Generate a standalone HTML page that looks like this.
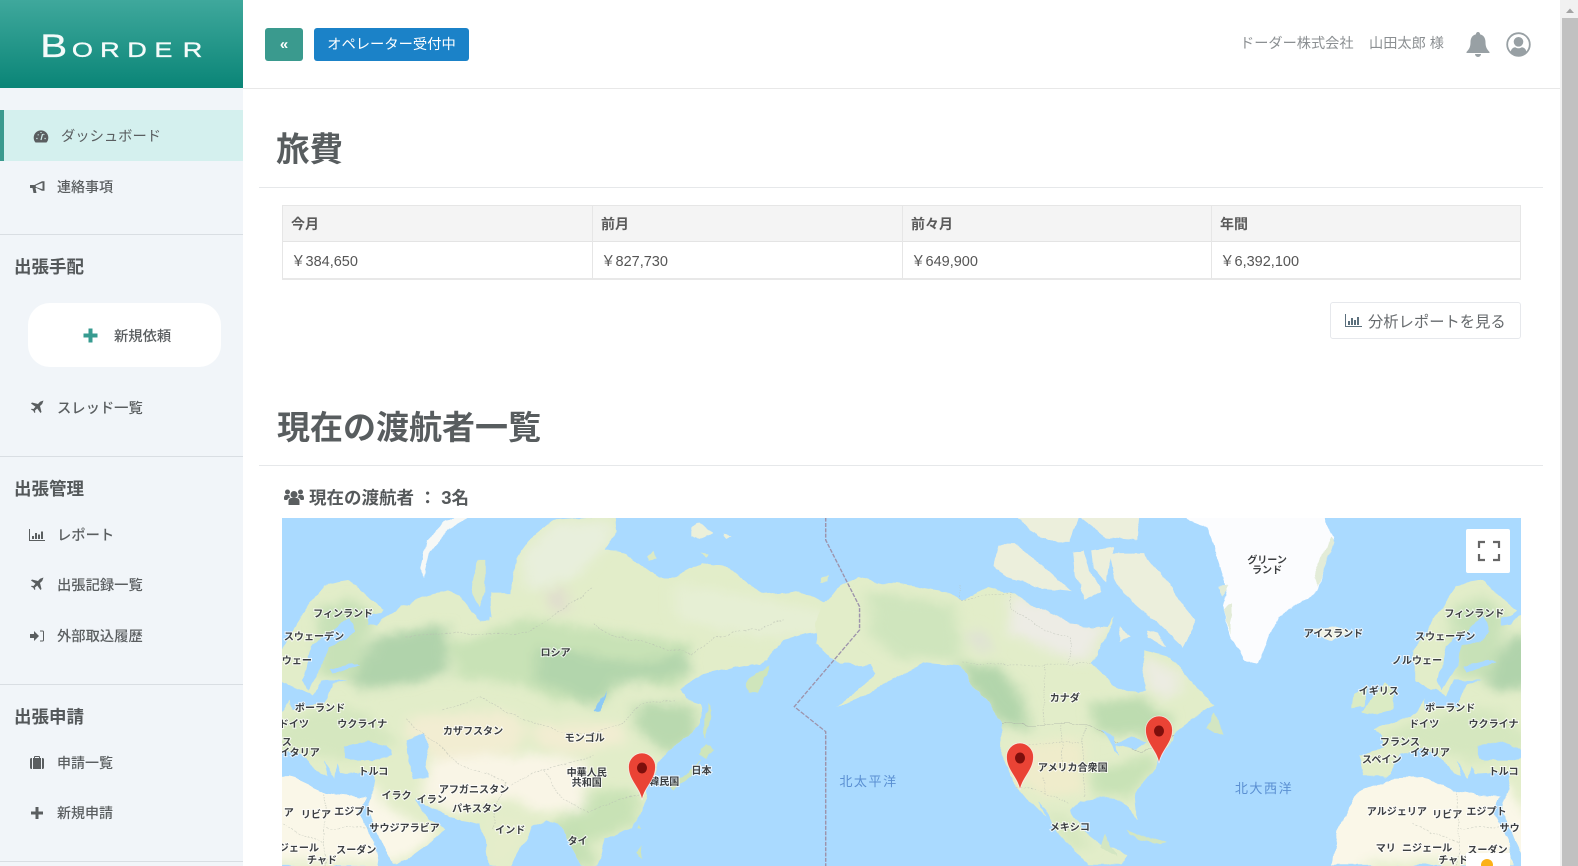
<!DOCTYPE html>
<html lang="ja"><head><meta charset="utf-8"><title>旅費</title>
<style>
*{box-sizing:border-box}
html,body{margin:0;padding:0;width:1578px;height:866px;overflow:hidden;background:#fff}
body{font-family:"Liberation Sans","Noto Sans CJK JP",sans-serif;color:#555;position:relative}
.t{position:absolute;white-space:nowrap;line-height:20px;font-size:14px}
.a{position:absolute}
.m{font-weight:500;color:#5a5e60}
.s{font-size:17.5px;font-weight:700;color:#54585a;left:14px}
.h{font-size:33px;line-height:40px;font-weight:700;color:#585d5f}
.hr{position:absolute;height:1px;background:#e6e8ea}
.sh{position:absolute;left:0;width:243px;height:1px;background:#d9dee3}
.cell{position:absolute;border:1px solid #e6e6e6;font-size:14px;line-height:36px;padding-left:8px;white-space:nowrap}
.th{background:#f4f4f4;font-weight:700;color:#5a5a5a;height:38px;top:205px;border-bottom:2px solid #e4e4e4}
.td{background:#fff;color:#555;height:38px;top:242px;border-top:0;border-bottom:2px solid #e8e8e8;line-height:40px;font-size:14.5px}
svg.i{position:absolute;fill:#5a5e60}
#map text{font-family:"Liberation Sans","Noto Sans CJK JP",sans-serif;font-size:10px;font-weight:700;fill:#3c3f42;text-anchor:middle;stroke:#fff;stroke-width:2px;stroke-opacity:.75;paint-order:stroke}
#map text.o{font-size:13px;font-weight:400;fill:#5a8fd2;stroke:none;letter-spacing:1.5px}
</style></head><body>

<!-- sidebar -->
<div class="a" style="left:0;top:0;width:243px;height:866px;background:#f1f5f9"></div>
<div class="a" style="left:0;top:0;width:243px;height:88px;background:linear-gradient(#3fa89c,#0a8577)"></div>
<svg class="a" style="left:0;top:0" width="243" height="88"><g fill="#f4fbfa" stroke="#f4fbfa" stroke-width=".35" font-family="Liberation Sans" transform="scale(1.26 1)"><text x="32" y="57" font-size="32">B</text><text x="57 79.500 101 122.500 145" y="57" font-size="21.500">ORDER</text></g></svg>

<div class="a" style="left:0;top:110px;width:243px;height:51px;background:#d4f0ee;border-left:4px solid #3a9a8e"></div>
<svg class="i" style="left:33px;top:129px" width="16" height="14" viewBox="0 0 16 14"><path d="M2.500 13.500A7.300 7.300 0 1 1 13.500 13.500Z"/><path d="M8 11L9.500 5M3.300 9.500h1.200M11.500 9.500h1.200M4.800 5.500l.7.700M10.500 5.800l.7-.7M8 3v1" stroke="#d4f0ee" stroke-width="1.200" fill="none"/></svg>
<div class="t" style="left:61px;top:127px;font-size:14.300px;color:#5a5e60">ダッシュボード</div>
<svg class="i" style="left:30px;top:180px" width="15" height="14" viewBox="0 0 15 14"><path d="M0 5h4.500L12 1.200h2.500V10.800H12L6.500 8H5.500L6.500 13H3.500L2.500 8H0Z"/><path d="M5.800 5.500L12.500 2.800V9.200L5.800 7Z" fill="#f1f5f9"/></svg>
<div class="t m" style="left:57px;top:177px">連絡事項</div>
<div class="sh" style="top:234px"></div>

<div class="t s" style="top:257px">出張手配</div>
<div class="a" style="left:28px;top:303px;width:193px;height:64px;background:#fff;border-radius:22px"></div>
<svg class="a" style="left:83px;top:328px" width="15" height="15" viewBox="0 0 15 15"><path d="M5.500 .5h4v5h5v4h-5v5h-4v-5h-5v-4h5z" fill="#379b90"/></svg>
<div class="t m" style="left:114px;top:327px;font-size:14.300px">新規依頼</div>
<svg class="i" style="left:30px;top:400px" width="14" height="14" viewBox="1 1 14 14"><path d="M14.500 1.500L11 2.800 9 5 3 3.500 2 4.500 6.500 7.800 4.500 10 2.500 9.700 2 10.500 4.300 11.800 5.500 14 6.300 13.500 6 11.500 8.200 9.500 11.500 14 12.500 13 11 7l2.200-2z"/></svg>
<div class="t m" style="left:57px;top:399px;font-size:14.300px">スレッド一覧</div>
<div class="sh" style="top:456px"></div>

<div class="t s" style="top:479px">出張管理</div>
<svg class="i" style="left:29px;top:529px" width="16" height="12" viewBox="0 0 16 12"><path d="M0 0h1v11h15v1H0zM3 7h2v3H3zM6 4h2v6H6zM9 5.500h2V10H9zM12 2.500h2V10h-2z"/></svg>
<div class="t m" style="left:57px;top:526px;font-size:14.300px">レポート</div>
<svg class="i" style="left:30px;top:577px" width="14" height="14" viewBox="1 1 14 14"><path d="M14.500 1.500L11 2.800 9 5 3 3.500 2 4.500 6.500 7.800 4.500 10 2.500 9.700 2 10.500 4.300 11.800 5.500 14 6.300 13.500 6 11.500 8.200 9.500 11.500 14 12.500 13 11 7l2.200-2z"/></svg>
<div class="t m" style="left:57px;top:576px;font-size:14.300px">出張記録一覧</div>
<svg class="i" style="left:30px;top:630px" width="14" height="12" viewBox="0 0 14 12"><path d="M0 4h4V1l5 5-5 5V8H0z"/><path d="M10 .5h2.500A1.500 1.500 0 0 1 14 2v8a1.500 1.500 0 0 1-1.500 1.500H10v-1h2.500a.5.5 0 0 0 .5-.5V2a.5.5 0 0 0-.5-.5H10z"/></svg>
<div class="t m" style="left:57px;top:627px;font-size:14.300px">外部取込履歴</div>
<div class="sh" style="top:684px"></div>

<div class="t s" style="top:707px">出張申請</div>
<svg class="i" style="left:30px;top:756px" width="14" height="13" viewBox="0 0 14 13"><path d="M0 3.500A1.500 1.500 0 0 1 1.500 2H2v11h-.5A1.500 1.500 0 0 1 0 11.500zM3 2h1V1a1 1 0 0 1 1-1h4a1 1 0 0 1 1 1v1h1v11H3zM5 2h4V1H5zM12 2h.5A1.500 1.500 0 0 1 14 3.500v8a1.500 1.500 0 0 1-1.500 1.500H12z"/></svg>
<div class="t m" style="left:57px;top:753px">申請一覧</div>
<svg class="i" style="left:31px;top:807px" width="12" height="12" viewBox="0 0 12 12"><path d="M4.500 0h3v4.500H12v3H7.500V12h-3V7.500H0v-3h4.500z"/></svg>
<div class="t m" style="left:57px;top:803px">新規申請</div>
<div class="sh" style="top:861px"></div>

<!-- header -->
<div class="a" style="left:243px;top:88px;width:1317px;height:1px;background:#e8e8e8"></div>
<div class="a" style="left:265px;top:28px;width:38px;height:33px;background:#3a9a8e;border-radius:3px;color:#fff;text-align:center;font-size:15px;line-height:33px;font-weight:700">«</div>
<div class="a" style="left:314px;top:28px;width:155px;height:33px;background:#1b82c8;border-radius:3px;color:#fff;text-align:center;font-size:14.300px;line-height:35px;white-space:nowrap">オペレーター受付中</div>
<div class="t" style="left:1240px;top:34px;font-size:14.200px;color:#8b8f92">ドーダー株式会社</div>
<div class="t" style="left:1369px;top:34px;font-size:14.200px;color:#8b8f92">山田太郎 様</div>
<svg class="a" style="left:1466px;top:32px" width="24" height="25" viewBox="0 0 24 25"><path d="M12 0a2 2 0 0 1 2 2.300c3.800 1 5.500 4 5.500 8 0 5 1.500 7 4 9.700V21H.5v-1c2.500-2.700 4-4.700 4-9.700 0-4 1.700-7 5.500-8A2 2 0 0 1 12 0zM9 22h6a3 3 0 0 1-6 0z" fill="#98a0a4"/></svg>
<svg class="a" style="left:1506px;top:32px" width="25" height="25" viewBox="0 0 25 25"><circle cx="12.500" cy="12.500" r="11.300" fill="none" stroke="#98a0a4" stroke-width="1.800"/><circle cx="12.500" cy="9.800" r="4.800" fill="#98a0a4"/><path d="M4.500 20c.8-3.500 3-4.800 4.800-4.800 1 .7 2 1 3.200 1s2.200-.3 3.200-1c1.800 0 4 1.300 4.800 4.800a11 11 0 0 1-16 0z" fill="#98a0a4"/></svg>

<!-- main -->
<div class="t h" style="left:276px;top:131px;font-size:33.500px">旅費</div>
<div class="hr" style="left:259px;top:187px;width:1284px"></div>

<div class="cell th" style="left:282px;width:311px">今月</div>
<div class="cell th" style="left:592px;width:311px">前月</div>
<div class="cell th" style="left:902px;width:310px">前々月</div>
<div class="cell th" style="left:1211px;width:310px">年間</div>
<div class="cell td" style="left:282px;width:311px">￥384,650</div>
<div class="cell td" style="left:592px;width:311px">￥827,730</div>
<div class="cell td" style="left:902px;width:310px">￥649,900</div>
<div class="cell td" style="left:1211px;width:310px">￥6,392,100</div>

<div class="a" style="left:1330px;top:302px;width:191px;height:37px;border:1px solid #e6e8ec;border-radius:3px;background:#fff"></div>
<svg class="i" style="left:1345px;top:314px;fill:#5b6f7c" width="17" height="13" viewBox="0 0 17 13"><path d="M0 0h1v12h16v1H0zM3 7h2v4H3zM6 4h2v7H6zM9 6h2v5H9zM12 3h2v8h-2z"/></svg>
<div class="t" style="left:1368px;top:312px;font-size:15.300px;line-height:22px;color:#666a6d">分析レポートを見る</div>

<div class="t h" style="left:277px;top:408px">現在の渡航者一覧</div>
<div class="hr" style="left:259px;top:465px;width:1284px"></div>

<svg class="i" style="left:284px;top:489px" width="20" height="16" viewBox="0 0 20 16"><circle cx="10" cy="5.500" r="3.500"/><circle cx="3.500" cy="3" r="2.500"/><circle cx="16.500" cy="3" r="2.500"/><path d="M4.500 16v-3.500C4.500 10 6 9 7.500 9h5c1.500 0 3 1 3 3.500V16zM0 9c0-2 1-3 2-3h3.500c-.3 1 .2 2 1 2.500-2 .3-3 1.500-3.200 2.500H1a1 1 0 0 1-1-1zM20 9c0-2-1-3-2-3h-3.500c.3 1-.2 2-1 2.500 2 .3 3 1.500 3.200 2.500H19a1 1 0 0 0 1-1z"/></svg>
<div class="t" style="left:309px;top:488px;font-size:17.500px;font-weight:700;color:#55595b">現在の渡航者 ： <span style="font-size:18.500px">3</span>名</div>

<!-- map -->
<svg id="map" class="a" style="left:0;top:0" width="1578" height="866" viewBox="0 0 1578 866">
<defs>
<clipPath id="mc"><rect x="282" y="518" width="1239" height="348"/></clipPath>
<filter id="b" x="-15%" y="-15%" width="130%" height="130%"><feGaussianBlur stdDeviation="16"/></filter>
<filter id="r" filterUnits="userSpaceOnUse" x="250" y="490" width="1300" height="400"><feTurbulence type="fractalNoise" baseFrequency=".04" numOctaves="4" seed="7" result="n"/><feDisplacementMap in="SourceGraphic" in2="n" scale="12" xChannelSelector="R" yChannelSelector="G" color-interpolation-filters="sRGB"/></filter>
<path id="eaP" d="M73 640L30 610 30 520 83 420 136 325 200 310 285 400 262 425 250 445 320 400 330 380 360 365 440 340 470 355 500 410 520 430 545 430 550 350 600 350 610 240 640 190 700 130 850 115 855 165 830 215 880 230 960 300 1000 300 1060 260 1130 270 1210 350 1290 340 1340 360 1400 400 1445 435 1420 470 1370 460 1320 470 1260 490 1225 545 1140 570 1070 590 1010 640 1030 665 1060 680 1060 740 1030 780 980 820 955 860 945 905 925 905 930 960 915 1000 890 1050 830 1085 810 1165 770 1165 745 1110 715 1045 680 1030 650 1050 600 1165 545 1165 535 1080 520 1040 445 1020 400 990 365 965 395 1025 440 1060 400 1095 320 1165 310 1165 290 1120 245 1000 252 960 262 885 180 890 170 860 165 905 135 850 147 895 130 890 85 830 50 815-2 830-34 895-92 895-103 830-40 815-44 780-66 755 19 720 41 700 57 665 60 695 140 680 160 620 200 610 130 610 110 660 85 640Z"/>
<path id="afP" d="M240 960L190 955 140 945 70 905 51 900-34 905-108 950-156 1060-170 1165H275L260 1090 225 1000Z"/>
<clipPath id="eaC"><use href="#eaP"/><use href="#afP"/></clipPath>
<g id="eurasia" transform="translate(270 480) scale(.408 .3333)">
<use href="#afP" fill="#faf7e8"/>
<use href="#eaP" fill="#e2edc9"/>
<path d="M-97 700L-40 620-18 640-30 700-60 710ZM-115 650L-85 630-90 680-120 690Z" fill="#dbebc4" stroke="#dbebc4" stroke-width="2"/>
<g clip-path="url(#eaC)"><g filter="url(#b)">
<path d="M190 600L270 480 440 440 440 590 350 620 240 640Z" fill="#b0d3ab"/>
<path d="M440 500L520 480 620 420 1040 500 1010 640 880 600 820 680 700 670 620 620 540 610 470 600Z" fill="#c8e2b6"/>
<path d="M660 510L740 520 900 560 1020 520 1040 590 960 600 850 620 800 690 730 640 660 620Z" fill="#b2d5ac"/>
<path d="M120 400L200 360 260 420 220 600 130 600Z" fill="#c7e1b7"/>
<path d="M900 680L1040 680 1055 780 980 830 900 750Z" fill="#b9d9af"/>
<path d="M770 950L900 940 910 1030 830 1080 780 1100 720 1030Z" fill="#c8e2b5"/>
<path d="M690 1040L760 1040 810 1165 730 1165Z" fill="#c5e0b4"/>
<path d="M350 720L590 700 640 760 600 820 460 850 400 830 340 770Z" fill="#f2edd2"/>
<path d="M660 740L870 740 880 800 720 830 650 790Z" fill="#f2edd2"/>
<path d="M400 840L640 830 780 850 780 1000 680 1010 590 960 450 1010 380 960Z" fill="#f9f5e6"/>
<path d="M-160 950L250 920 300 1000 420 1070 310 1165-170 1165Z" fill="#faf7e8"/>
<path d="M550 1010L640 1030 620 1100 580 1165 540 1160Z" fill="#e5edca"/>
<path d="M-80 1145L300 1150 300 1190-100 1190Z" fill="#e7efcf"/>
<path d="M640 340L760 300 850 180 830 130 700 140 620 240Z" fill="#e8efdc"/>
<path d="M680 340L730 330 740 400 700 410Z" fill="#e0ddce"/>
<path d="M1000 320L1200 360 1400 420 1380 470 1250 480 1150 470 1000 420Z" fill="#e6efd4"/>
<path d="M-60 780L140 690 240 700 320 800 200 850 60 820Z" fill="#d5e7bf"/>
</g></g>
<g fill="#aadaff" stroke="#aadaff" stroke-width="3">
<path d="M110 510L200 420 210 440 215 470 190 490 150 510 135 560 120 600 100 640 90 610 100 550Z"/>
<path d="M155 570L205 555 225 560 160 585Z"/>
<path d="M190 810L250 795 290 810 300 835 265 845 205 845 190 840Z"/>
<path d="M345 790L385 770 395 810 385 860 395 900 360 905 350 860Z"/>
<path d="M525 300L538 240 542 330 550 420 530 415Z"/>
<path d="M245 420L285 410 270 440 245 445Z"/>
<path d="M800 700L830 640 820 700Z" fill="#8cc9f5" stroke="none"/>
</g>
<path d="M385 300L400 220 440 160 505 115 480 115 440 125 390 190 375 280Z" fill="#f6f8f6"/>
<g fill="#dceac6">
<path d="M1040 150L1060 135 1090 170 1060 190 1040 180Z" fill="#ecf0da"/><path d="M1110 170L1135 175 1120 185Z" fill="#ecf0da"/>
<path d="M930 235L945 225 950 245 935 250Z"/><path d="M1060 225L1080 230 1075 240Z"/>
<path d="M1355 300L1380 295 1375 310 1355 310Z"/>
<path d="M515 250L535 250 535 350 520 395 500 340Z"/>
<path d="M1230 560L1215 600 1200 650 1180 650 1175 620 1200 580Z" fill="#cfe5bb"/>
<path d="M1075 680L1085 730 1075 780 1068 720Z" fill="#cfe5bb"/>
<path d="M1075 800L1090 820 1070 840 1055 830Z" fill="#cfe5bb"/>
<path d="M1060 840L1040 900 990 945 980 930 1030 890Z" fill="#cfe5bb"/>
<path d="M915 1110L920 1145 905 1130Z" fill="#cfe5bb"/><path d="M910 1035L915 1055 905 1050Z" fill="#cfe5bb"/>
</g>
<g fill="none" stroke="#b8bdb2" stroke-width="1.800" stroke-dasharray="5 4" opacity=".7">
<path d="M430 700L520 660 600 710 660 740 720 760 800 770 870 740 910 680 1000 670"/>
<path d="M340 480L440 470 500 470 640 470 800 330M800 440L830 470 1040 530 1100 480 1270 430"/>
<path d="M590 920L680 880 800 830M680 880L720 970 790 1000 910 950"/>
<path d="M340 730L420 800 470 860 580 910 560 1000 550 1060"/>
<path d="M140 950V1165M250 1050H140M30 1040L140 1100"/>
</g>
</g>
<path id="naP" d="M-190 440L-170 380-130 330-90 300-30 320 0 320 100 340 150 370 210 330 270 350 330 400 400 440 480 450 500 420 450 560 500 620 555 650 570 640 570 520 630 540 660 590 700 640 730 690 690 720 640 770 615 830 600 850 590 880 550 950 555 1025 530 980 470 960 420 970 400 1000 430 1060 470 1100 530 1130 510 1165 440 1165 360 1050 300 970 275 930 240 830 240 740 190 640 140 570 60 560 0 600-60 650-140 690-90 640-50 590-60 560-130 560-190 500Z"/>
<clipPath id="naC"><use href="#naP"/></clipPath>
</defs>
<g clip-path="url(#mc)">
<rect x="282" y="518" width="1239" height="348" fill="#aadaff"/>
<g filter="url(#r)">
<!-- eurasia/africa, repeated at world wrap -->
<use href="#eurasia"/>
<use href="#eurasia" x="1134"/>

<!-- alaska piece + n america (z8 space) -->
<g transform="translate(900 480) scale(.4338 .3333)">
<use href="#naP" fill="#e2edc9"/>
<g clip-path="url(#naC)"><g filter="url(#b)">
<path d="M130 560L240 570 300 690 300 760 230 740 170 620Z" fill="#b2d5ab"/>
<path d="M-70 340L130 380 150 550 0 540-60 480Z" fill="#cfe5bd"/>
<path d="M440 680L560 660 630 720 620 800 560 770 460 770Z" fill="#bddcb0"/>
<path d="M440 880L590 830 590 880 540 960 460 960Z" fill="#c8e2b6"/>
<path d="M260 350L480 440 440 560 390 540 260 470Z" fill="#edece5"/>
<path d="M570 530L660 600 640 660 570 640Z" fill="#ecece2"/>
<path d="M270 800L430 790 430 950 330 960 270 900Z" fill="#efeccb"/>
<path d="M340 1000L400 1020 450 1110 400 1120Z" fill="#d6e7bf"/>
<path d="M160 450L210 470 220 530 170 510Z" fill="#dfe2d4"/>
</g></g>
<path d="M322 975L345 1035 368 1062 340 1000Z" fill="#aadaff"/>
<g fill="#ecefdc">
<path d="M245 115H560L555 190 480 180 420 120 400 190 340 190 320 160 280 130Z"/>
<path d="M235 200L270 200 340 270 400 340 330 330 250 300 225 270Z"/>
<path d="M405 225L430 220 445 290 470 340 430 370 410 300ZM450 220L500 210 480 310 455 280Z"/>
<path d="M490 230L570 230 640 350 690 430 660 510 600 440 520 350 500 290Z"/>
<path d="M510 450L540 480 510 495ZM575 460L600 470 620 510 580 480Z"/>
</g>
<path d="M640 115H980L1005 180 970 340 880 420 830 560 800 550 770 480 750 400 760 330 740 250 710 150Z" fill="#fbfcfe"/>
<path d="M960 300L980 240 1000 180 1005 200 970 330ZM750 400L770 380 770 470ZM740 320L765 320 750 355Z" fill="#e3ecd8"/>
<path d="M960 460L1010 450 1050 465 1000 495 975 485Z" fill="#eef1e2"/>
<path d="M710 755L730 710 755 770 720 765ZM530 1055L620 1095 600 1100 540 1070ZM480 1065L505 1140 470 1110Z" fill="#d3e6c2"/>
<g fill="none" stroke="#b6bcb2" stroke-width="1.400" stroke-dasharray="4 4" opacity=".8">
<path d="M145 325V370L260 345 260 390 340 460 400 480 395 560M150 560L450 562"/>
<path d="M340 560V740M430 745V960"/>
<path d="M300 800H430M330 860H440M340 900V950M380 740V880"/>
<path d="M275 930L340 950 400 980"/>
</g>
<path d="M240 742H440L490 780 560 830 600 800 640 770" fill="none" stroke="#aab0a6" stroke-width="1.300"/>
<path d="M540 780L580 790 550 820 500 800ZM470 760L500 775 510 830 490 790Z" fill="#aadaff"/>
</g>
</g>

<!-- date line -->
<g transform="translate(270 480) scale(.408 .3333)" fill="none" stroke="#9d93ab" stroke-width="3.500" stroke-dasharray="12 4"><path d="M1362 113V180L1445 380V450L1285 680 1362 755V1165"/></g>

<!-- labels -->
<g transform="scale(1.0064)">
<text x="341" y="613">フィンランド</text><text x="312" y="636">スウェーデン</text><text x="295" y="660">ウェー</text><text x="318" y="707">ポーランド</text><text x="292" y="723">ドイツ</text><text x="360" y="723">ウクライナ</text><text x="285" y="741">ス</text><text x="298" y="751">イタリア</text><text x="371" y="770">トルコ</text><text x="470" y="730">カザフスタン</text><text x="581" y="737">モンゴル</text><text x="552" y="652">ロシア</text><text x="583" y="771">中華人民</text><text x="583" y="781">共和国</text><text x="660" y="780">韓民国</text><text x="697" y="769">日本</text><text x="394" y="794">イラク</text><text x="429" y="798">イラン</text><text x="471" y="788">アフガニスタン</text><text x="474" y="807">パキスタン</text><text x="507" y="828">インド</text><text x="574" y="839">タイ</text><text x="287" y="811">ア</text><text x="314" y="813">リビア</text><text x="352" y="810">エジプト</text><text x="402" y="826">サウジアラビア</text><text x="297" y="846">ジェール</text><text x="320" y="858">チャド</text><text x="354" y="848">スーダン</text>
<text x="1058" y="697">カナダ</text><text x="1066" y="766">アメリカ合衆国</text><text x="1063" y="825">メキシコ</text><text x="1259" y="560">グリーン</text><text x="1259" y="570">ランド</text><text x="1325" y="633">アイスランド</text><text x="1465" y="613">フィンランド</text><text x="1436" y="636">スウェーデン</text><text x="1408" y="660">ノルウェー</text><text x="1370" y="690">イギリス</text><text x="1441" y="707">ポーランド</text><text x="1415" y="723">ドイツ</text><text x="1484" y="723">ウクライナ</text><text x="1391" y="741">フランス</text><text x="1421" y="751">イタリア</text><text x="1373" y="758">スペイン</text><text x="1494" y="770">トルコ</text><text x="1388" y="810">アルジェリア</text><text x="1438" y="813">リビア</text><text x="1477" y="810">エジプト</text><text x="1500" y="826">サウ</text><text x="1377" y="846">マリ</text><text x="1418" y="846">ニジェール</text><text x="1444" y="858">チャド</text><text x="1478" y="848">スーダン</text>
<text class="o" x="863" y="781">北太平洋</text><text class="o" x="1256" y="788">北大西洋</text>
</g>

<!-- pins -->
<defs><g id="pin"><path d="M0 0C-2-12-13.500-20-13.500-33A13.500 14 0 1 1 13.500-33C13.500-20 2-12 0 0Z" fill="#ea4335" stroke="#fff" stroke-opacity=".7" stroke-width=".8"/><ellipse cx="0" cy="-32" rx="5" ry="5.500" fill="#7d0f0c"/></g></defs>
<use href="#pin" transform="translate(642 800)"/>
<use href="#pin" transform="translate(1020 790)"/>
<use href="#pin" transform="translate(1159 763)"/>

<!-- controls -->
<rect x="1466" y="529" width="44" height="44" rx="2" fill="#fff"/>
<path d="M1479 548v-6h6M1499 548v-6h-6M1479 554v6h6M1499 554v6h-6" fill="none" stroke="#666" stroke-width="2.200"/>
<rect x="1466" y="853" width="44" height="14" fill="#fff"/>
<circle cx="1487" cy="865" r="6" fill="#fbb117"/>
</g>
</svg>

<!-- scrollbar -->
<div class="a" style="left:1560px;top:0;width:18px;height:866px;background:#f1f1f1"></div>
<div class="a" style="left:1562px;top:18px;width:16px;height:848px;background:#c1c1c1"></div>
<svg class="a" style="left:1562px;top:5px" width="16" height="10"><path d="M4 8L8 3.500 12 8Z" fill="#a3a3a3"/></svg>
</body></html>
